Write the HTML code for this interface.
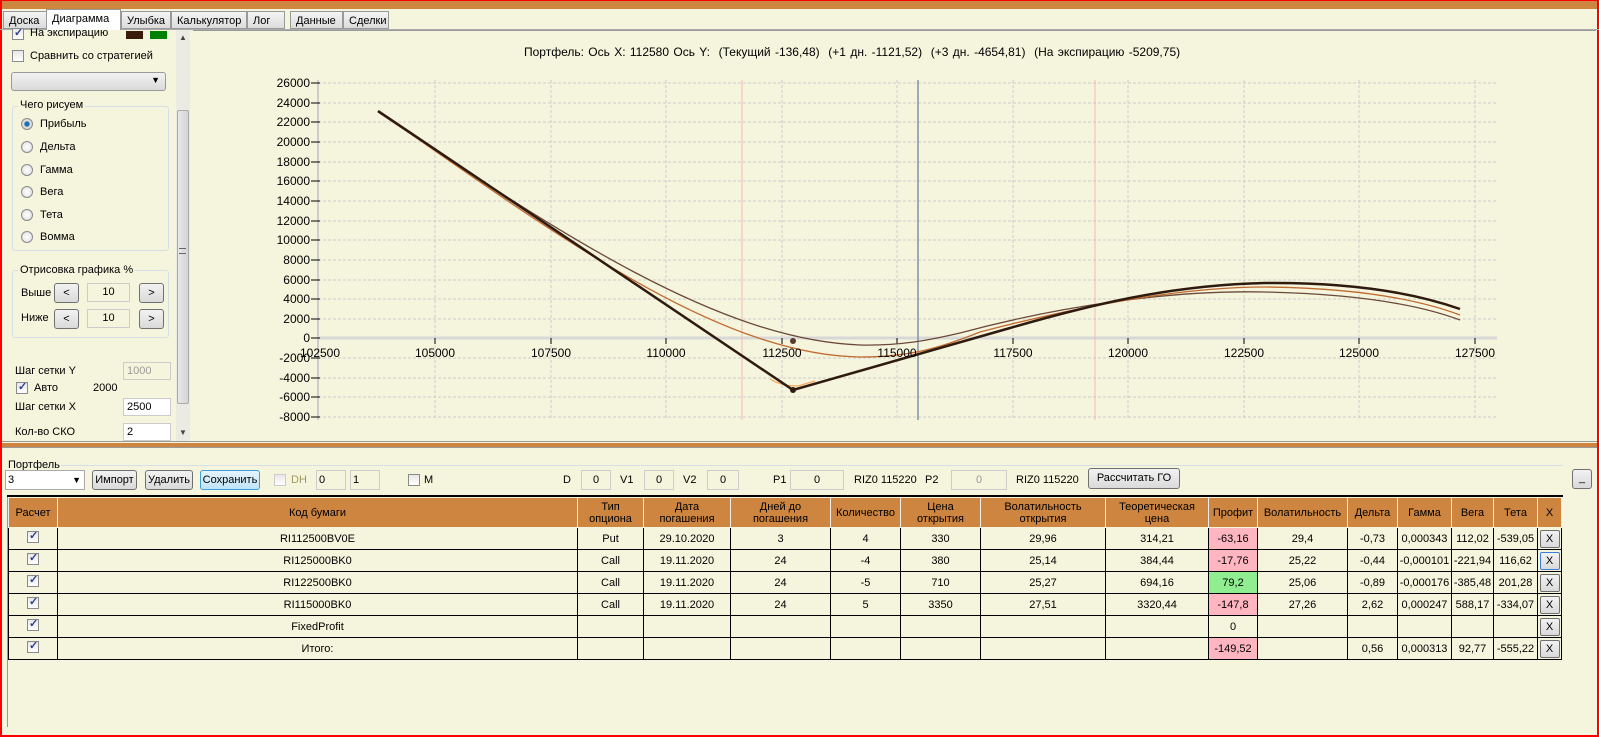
<!DOCTYPE html>
<html><head><meta charset="utf-8"><style>
*{box-sizing:border-box;margin:0;padding:0}
body{width:1599px;height:737px;overflow:hidden;background:#f5f4dc;font-family:"Liberation Sans",sans-serif;font-size:11px;color:#000;position:relative}
.a{position:absolute}
.tab{position:absolute;top:11px;height:18px;border:1px solid #999;background:linear-gradient(#f4f4f4,#dcdcdc);padding:3px 4px 0 5px;font-size:11px}
.cb{position:absolute;width:12px;height:12px;border:1px solid #8a8a8a;background:linear-gradient(#e8e8e8,#fff)}
.cb.k::after{content:"✓";position:absolute;left:1px;top:-3px;font-size:11px;color:#2a3f8f;font-weight:bold}
.rad{position:absolute;width:12px;height:12px;border-radius:50%;border:1px solid #8a8a8a;background:radial-gradient(#fff,#ddd)}
.btn{position:absolute;border:1px solid #707070;border-radius:3px;background:linear-gradient(#f2f2f2,#dadada);text-align:center;font-size:11px}
.box{position:absolute;border:1px solid #ccc;background:#f5f4dc;text-align:center;font-size:11px}
.grp{position:absolute;border:1px solid #d5dfe5;border-radius:3px}
table{border-collapse:collapse;position:absolute;left:8px;top:498px;width:1553px;table-layout:fixed}
td,th{border:1px solid #000;text-align:center;font-size:11px;font-weight:normal;height:22px;padding:0 1px;white-space:nowrap;overflow:hidden}
th{background:#cd853f;border-color:#f5f4dc;height:30px;line-height:12px;border-left:1px solid #eee;border-right:1px solid #eee}
.pk{background:#ffb6c1}.gr{background:#90ee90}
.x{display:inline-block;width:20px;height:18px;border:1px solid #707070;border-radius:2px;background:linear-gradient(#f2f2f2,#dadada);line-height:16px}
.yl{position:absolute;left:262px;width:48px;text-align:right;font-size:12px}
.xl{position:absolute;top:346px;width:60px;text-align:center;font-size:12px}
</style></head><body>
<div class="a" style="left:0;top:0;width:1599px;height:9px;background:#cd853f;border-top:1px solid red"></div>
<div class="a" style="left:0;top:0;width:2px;height:737px;background:red"></div>
<div class="a" style="right:0;top:0;width:2px;height:737px;background:red"></div>
<div class="a" style="left:0;bottom:0;width:1599px;height:2px;background:red"></div>
<div class="a" style="left:0;top:29px;width:1599px;height:1px;background:#aaa"></div>
<div class="tab" style="left:3px;width:44px">Доска</div>
<div class="tab" style="left:46px;top:9px;height:21px;width:75px;background:#fff;border-bottom:none">Диаграмма</div>
<div class="tab" style="left:121px;width:50px">Улыбка</div>
<div class="tab" style="left:171px;width:76px">Калькулятор</div>
<div class="tab" style="left:247px;width:38px">Лог</div>
<div class="tab" style="left:290px;width:53px">Данные</div>
<div class="tab" style="left:343px;width:46px">Сделки</div>

<!-- left panel -->
<div class="cb k" style="left:12px;top:28px"></div><div class="a" style="left:30px;top:27px">На экспирацию</div>
<div class="a" style="left:126px;top:31px;width:17px;height:8px;background:#3a1a0a"></div>
<div class="a" style="left:150px;top:31px;width:17px;height:8px;background:#008000"></div>
<div class="cb" style="left:12px;top:50px"></div><div class="a" style="left:30px;top:50px">Сравнить со стратегией</div>
<div class="btn" style="left:11px;top:72px;width:155px;height:19px;border-color:#999"><span class="a" style="right:5px;top:2px;font-size:9px">▼</span></div>
<div class="grp" style="left:12px;top:106px;width:157px;height:145px"></div>
<div class="a" style="left:18px;top:99px;background:#f5f4dc;padding:0 2px">Чего рисуем</div>
<div class="rad" style="left:21px;top:118px;background:radial-gradient(#1e6fb0 30%,#ddd 45%)"></div><div class="a" style="left:40px;top:118px">Прибыль</div>
<div class="rad" style="left:21px;top:141px"></div><div class="a" style="left:40px;top:141px">Дельта</div>
<div class="rad" style="left:21px;top:164px"></div><div class="a" style="left:40px;top:164px">Гамма</div>
<div class="rad" style="left:21px;top:186px"></div><div class="a" style="left:40px;top:186px">Вега</div>
<div class="rad" style="left:21px;top:209px"></div><div class="a" style="left:40px;top:209px">Тета</div>
<div class="rad" style="left:21px;top:231px"></div><div class="a" style="left:40px;top:231px">Вомма</div>
<div class="grp" style="left:12px;top:270px;width:157px;height:68px"></div>
<div class="a" style="left:18px;top:264px;background:#f5f4dc;padding:0 2px">Отрисовка графика %</div>
<div class="a" style="left:21px;top:287px">Выше</div>
<div class="btn" style="left:54px;top:283px;width:25px;height:20px;line-height:18px">&lt;</div>
<div class="box" style="left:87px;top:283px;width:43px;height:19px;line-height:17px">10</div>
<div class="btn" style="left:139px;top:283px;width:25px;height:20px;line-height:18px">&gt;</div>
<div class="a" style="left:21px;top:312px">Ниже</div>
<div class="btn" style="left:54px;top:309px;width:25px;height:20px;line-height:18px">&lt;</div>
<div class="box" style="left:87px;top:309px;width:43px;height:19px;line-height:17px">10</div>
<div class="btn" style="left:139px;top:309px;width:25px;height:20px;line-height:18px">&gt;</div>
<div class="a" style="left:15px;top:365px">Шаг сетки Y</div>
<div class="box" style="left:123px;top:362px;width:48px;height:18px;line-height:16px;text-align:left;padding-left:3px;color:#999">1000</div>
<div class="cb k" style="left:16px;top:382px"></div><div class="a" style="left:34px;top:382px">Авто</div>
<div class="a" style="left:93px;top:382px">2000</div>
<div class="a" style="left:15px;top:401px">Шаг сетки X</div>
<div class="box" style="left:123px;top:398px;width:48px;height:18px;line-height:16px;text-align:left;padding-left:3px;background:#fff">2500</div>
<div class="a" style="left:15px;top:426px">Кол-во СКО</div>
<div class="box" style="left:123px;top:423px;width:48px;height:18px;line-height:16px;text-align:left;padding-left:3px;background:#fff">2</div>
<div class="a" style="left:176px;top:30px;width:14px;height:412px;background:#ebebe4"></div>
<div class="a" style="left:177px;top:110px;width:12px;height:294px;background:linear-gradient(90deg,#e8e8e8,#d4d4d4);border:1px solid #aaa;border-radius:2px"></div>
<div class="a" style="left:179px;top:33px;font-size:8px;color:#444">▲</div>
<div class="a" style="left:179px;top:428px;font-size:8px;color:#444">▼</div>
<div class="a" style="left:179px;top:248px;width:7px;height:6px;border-top:1px solid #666;border-bottom:1px solid #666"></div>

<!-- chart -->
<div class="a" style="left:193px;top:30px;width:1403px;height:1px;background:#999"></div>
<div class="a" style="left:524px;top:45px;font-size:12px;word-spacing:1px">Портфель: Ось X: 112580 Ось Y:&nbsp; (Текущий -136,48)&nbsp; (+1 дн. -1121,52)&nbsp; (+3 дн. -4654,81)&nbsp; (На экспирацию -5209,75)</div>
<svg class="a" style="left:0;top:0" width="1599" height="445">
<g stroke="#ccc" stroke-dasharray="3,2" stroke-width="1">
<path d="M318 83H1497M318 103H1497M318 122H1497M318 142H1497M318 162H1497M318 181H1497M318 201H1497M318 221H1497M318 240H1497M318 260H1497M318 280H1497M318 299H1497M318 319H1497M318 358H1497M318 378H1497M318 397H1497M318 417H1497"/>
<path d="M435 80V420M551 80V420M666 80V420M782 80V420M897 80V420M1013 80V420M1128 80V420M1244 80V420M1359 80V420M1475 80V420"/>
</g>
<path d="M318 80V420" stroke="#ccc" stroke-width="2"/>
<path d="M318 338H1497" stroke="#d8d8d8" stroke-width="3"/>
<g stroke="#000"><path d="M311 83h9M311 103h9M311 122h9M311 142h9M311 162h9M311 181h9M311 201h9M311 221h9M311 240h9M311 260h9M311 280h9M311 299h9M311 319h9M311 338h9M311 358h9M311 378h9M311 397h9M311 417h9"/>
<path d="M435 338v6M551 338v6M666 338v6M782 338v6M897 338v6M1013 338v6M1128 338v6M1244 338v6M1359 338v6M1475 338v6"/></g>
<path d="M742 80V420M1095 80V420" stroke="#f4b8b8"/>
<path d="M918 80V420" stroke="#8090a8" stroke-width="1.5"/>
<path d="M378 112 C560 234,720 340,860 345 C900 346,930 340,960 333 C1060 306,1170 290,1265 292 C1360 294,1420 305,1460 320" fill="none" stroke="#6b4a3a" stroke-width="1.3"/>
<path d="M378 111 C560 238,720 355,860 357 C910 357,940 348,980 332 C1080 306,1180 287,1265 287 C1360 288,1420 300,1460 315" fill="none" stroke="#c06a30" stroke-width="1.3"/>
<path d="M770 379 C780 385,788 386,798 386 L815 381" fill="none" stroke="#f4a860" stroke-width="1.3"/>
<path d="M378 111 L793 390 L1010 328 C1090 305,1170 285,1265 283 C1360 282,1420 295,1460 309" fill="none" stroke="#2e1a0e" stroke-width="2.5"/>
<circle cx="793" cy="390" r="3" fill="#2e1a0e"/><circle cx="793" cy="341" r="3" fill="#5a3a2a"/>
</svg>
<div class="yl" style="top:76px">26000</div><div class="yl" style="top:96px">24000</div><div class="yl" style="top:115px">22000</div><div class="yl" style="top:135px">20000</div><div class="yl" style="top:155px">18000</div><div class="yl" style="top:174px">16000</div><div class="yl" style="top:194px">14000</div><div class="yl" style="top:214px">12000</div><div class="yl" style="top:233px">10000</div><div class="yl" style="top:253px">8000</div><div class="yl" style="top:273px">6000</div><div class="yl" style="top:292px">4000</div><div class="yl" style="top:312px">2000</div><div class="yl" style="top:331px">0</div><div class="yl" style="top:351px">-2000</div><div class="yl" style="top:371px">-4000</div><div class="yl" style="top:390px">-6000</div><div class="yl" style="top:410px">-8000</div>
<div class="xl" style="left:290px">102500</div><div class="xl" style="left:405px">105000</div><div class="xl" style="left:521px">107500</div><div class="xl" style="left:636px">110000</div><div class="xl" style="left:752px">112500</div><div class="xl" style="left:867px">115000</div><div class="xl" style="left:983px">117500</div><div class="xl" style="left:1098px">120000</div><div class="xl" style="left:1214px">122500</div><div class="xl" style="left:1329px">125000</div><div class="xl" style="left:1445px">127500</div>

<!-- splitter -->
<div class="a" style="left:2px;top:441px;width:1595px;height:1px;background:#999"></div>
<div class="a" style="left:2px;top:443px;width:1595px;height:4px;background:#cd853f"></div>
<div class="a" style="left:2px;top:447px;width:1595px;height:1px;background:#999"></div>

<!-- portfolio -->
<div class="a" style="left:8px;top:465px;width:1555px;height:1px;background:#d5dfe5"></div>
<div class="a" style="left:7px;top:459px;background:#f5f4dc;padding:0 1px">Портфель</div>
<div class="box" style="left:5px;top:470px;width:80px;height:20px;background:#fff;text-align:left;padding-left:2px;line-height:18px;border-color:#aaa">3<span class="a" style="right:3px;top:0;font-size:9px">▼</span></div>
<div class="btn" style="left:92px;top:470px;width:45px;height:20px;line-height:18px">Импорт</div>
<div class="btn" style="left:145px;top:470px;width:48px;height:20px;line-height:18px">Удалить</div>
<div class="btn" style="left:200px;top:470px;width:60px;height:20px;line-height:18px;border-color:#3c9fd8;background:linear-gradient(#e6f4fc,#bfe4f8)">Сохранить</div>
<div class="cb" style="left:274px;top:474px;border-color:#ccc"></div><div class="a" style="left:291px;top:474px;color:#a09a60">DH</div>
<div class="box" style="left:316px;top:470px;width:30px;height:20px;text-align:left;padding-left:2px;line-height:18px">0</div>
<div class="box" style="left:350px;top:470px;width:30px;height:20px;text-align:left;padding-left:2px;line-height:18px">1</div>
<div class="cb" style="left:408px;top:474px"></div><div class="a" style="left:424px;top:474px">M</div>
<div class="a" style="left:563px;top:474px">D</div><div class="box" style="left:581px;top:470px;width:30px;height:20px;line-height:18px">0</div>
<div class="a" style="left:620px;top:474px">V1</div><div class="box" style="left:644px;top:470px;width:30px;height:20px;line-height:18px">0</div>
<div class="a" style="left:683px;top:474px">V2</div><div class="box" style="left:707px;top:470px;width:32px;height:20px;line-height:18px">0</div>
<div class="a" style="left:773px;top:474px">P1</div><div class="box" style="left:790px;top:470px;width:54px;height:20px;line-height:18px">0</div>
<div class="a" style="left:854px;top:474px">RIZ0 115220</div>
<div class="a" style="left:925px;top:474px">P2</div><div class="box" style="left:951px;top:470px;width:56px;height:20px;line-height:18px;color:#999">0</div>
<div class="a" style="left:1016px;top:474px">RIZ0 115220</div>
<div class="btn" style="left:1088px;top:468px;width:92px;height:21px;line-height:19px">Рассчитать ГО</div>
<div class="btn" style="left:1572px;top:469px;width:20px;height:20px;line-height:16px">_</div>
<div class="a" style="left:7px;top:495px;width:1556px;height:2px;background:#000"></div>
<div class="a" style="left:7px;top:497px;width:1px;height:230px;background:#999"></div>
<table style="left:8px;top:497px;width:1553px">
<colgroup><col style="width:49px"><col style="width:520px"><col style="width:66px"><col style="width:87px"><col style="width:100px"><col style="width:70px"><col style="width:80px"><col style="width:125px"><col style="width:103px"><col style="width:49px"><col style="width:90px"><col style="width:50px"><col style="width:54px"><col style="width:42px"><col style="width:44px"><col style="width:24px"></colgroup>
<tr><th>Расчет</th><th>Код бумаги</th><th>Тип<br>опциона</th><th>Дата<br>погашения</th><th>Дней до<br>погашения</th><th>Количество</th><th>Цена<br>открытия</th><th>Волатильность<br>открытия</th><th>Теоретическая<br>цена</th><th>Профит</th><th>Волатильность</th><th>Дельта</th><th>Гамма</th><th>Вега</th><th>Тета</th><th>X</th></tr>
<tr><td><span class="cb k" style="position:relative;display:inline-block"></span></td><td>RI112500BV0E</td><td>Put</td><td>29.10.2020</td><td>3</td><td>4</td><td>330</td><td>29,96</td><td>314,21</td><td class="pk">-63,16</td><td>29,4</td><td>-0,73</td><td>0,000343</td><td>112,02</td><td>-539,05</td><td><span class="x">X</span></td></tr>
<tr><td><span class="cb k" style="position:relative;display:inline-block"></span></td><td>RI125000BK0</td><td>Call</td><td>19.11.2020</td><td>24</td><td>-4</td><td>380</td><td>25,14</td><td>384,44</td><td class="pk">-17,76</td><td>25,22</td><td>-0,44</td><td>-0,000101</td><td>-221,94</td><td>116,62</td><td><span class="x" style="border-color:#3c7fd8">X</span></td></tr>
<tr><td><span class="cb k" style="position:relative;display:inline-block"></span></td><td>RI122500BK0</td><td>Call</td><td>19.11.2020</td><td>24</td><td>-5</td><td>710</td><td>25,27</td><td>694,16</td><td class="gr">79,2</td><td>25,06</td><td>-0,89</td><td>-0,000176</td><td>-385,48</td><td>201,28</td><td><span class="x">X</span></td></tr>
<tr><td><span class="cb k" style="position:relative;display:inline-block"></span></td><td>RI115000BK0</td><td>Call</td><td>19.11.2020</td><td>24</td><td>5</td><td>3350</td><td>27,51</td><td>3320,44</td><td class="pk">-147,8</td><td>27,26</td><td>2,62</td><td>0,000247</td><td>588,17</td><td>-334,07</td><td><span class="x">X</span></td></tr>
<tr><td><span class="cb k" style="position:relative;display:inline-block"></span></td><td>FixedProfit</td><td></td><td></td><td></td><td></td><td></td><td></td><td></td><td>0</td><td></td><td></td><td></td><td></td><td></td><td><span class="x">X</span></td></tr>
<tr><td><span class="cb k" style="position:relative;display:inline-block"></span></td><td>Итого:</td><td></td><td></td><td></td><td></td><td></td><td></td><td></td><td class="pk">-149,52</td><td></td><td>0,56</td><td>0,000313</td><td>92,77</td><td>-555,22</td><td><span class="x">X</span></td></tr>
</table>
</body></html>
